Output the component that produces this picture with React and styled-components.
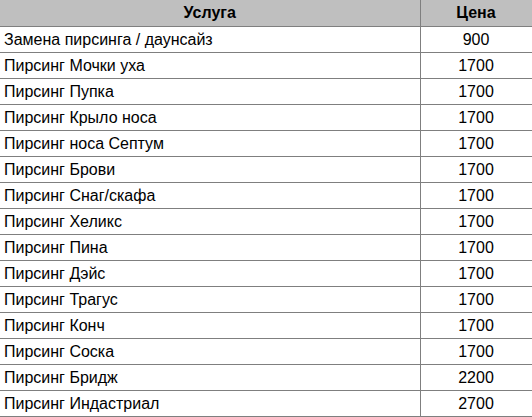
import React from "react";
import styled, { createGlobalStyle } from "styled-components";

const Global = createGlobalStyle`
  html, body { margin: 0; padding: 0; background: #ffffff; }
  body { font-family: "Liberation Sans", Arial, sans-serif; }
`;

const Table = styled.table`
  border-collapse: collapse;
  width: 532px;
  table-layout: fixed;
  font-family: "Liberation Sans", Arial, sans-serif;
  font-size: 16px;
  color: #000;
`;

const HeadCell = styled.th`
  background: #bfbfbf;
  font-weight: bold;
  text-align: center;
  height: 26px;
  padding: 0;
  border-bottom: 1px solid #7f7f7f;
  border-right: ${(p) => (p.$last ? "1px solid #7f7f7f" : "1px solid #7f7f7f")};
  box-sizing: border-box;
`;

const Cell = styled.td`
  height: 25px;
  padding: 0 0 0 ${(p) => (p.$center ? "0" : "4px")};
  text-align: ${(p) => (p.$center ? "center" : "left")};
  border-bottom: 1px solid #7f7f7f;
  border-right: 1px solid #7f7f7f;
  white-space: nowrap;
  line-height: 25px;
`;

const rows = [
  ["Замена пирсинга / даунсайз", "900"],
  ["Пирсинг Мочки уха", "1700"],
  ["Пирсинг Пупка", "1700"],
  ["Пирсинг Крыло носа", "1700"],
  ["Пирсинг носа Септум", "1700"],
  ["Пирсинг Брови", "1700"],
  ["Пирсинг Снаг/скафа", "1700"],
  ["Пирсинг Хеликс", "1700"],
  ["Пирсинг Пина", "1700"],
  ["Пирсинг Дэйс", "1700"],
  ["Пирсинг Трагус", "1700"],
  ["Пирсинг Конч", "1700"],
  ["Пирсинг Соска", "1700"],
  ["Пирсинг Бридж", "2200"],
  ["Пирсинг Индастриал", "2700"],
];

export default function App() {
  return (
    <>
      <Global />
      <Table>
        <colgroup>
          <col style={{ width: 420 }} />
          <col style={{ width: 112 }} />
        </colgroup>
        <thead>
          <tr>
            <HeadCell>Услуга</HeadCell>
            <HeadCell $last>Цена</HeadCell>
          </tr>
        </thead>
        <tbody>
          {rows.map(([name, price]) => (
            <tr key={name}>
              <Cell>{name}</Cell>
              <Cell $center>{price}</Cell>
            </tr>
          ))}
        </tbody>
      </Table>
    </>
  );
}
